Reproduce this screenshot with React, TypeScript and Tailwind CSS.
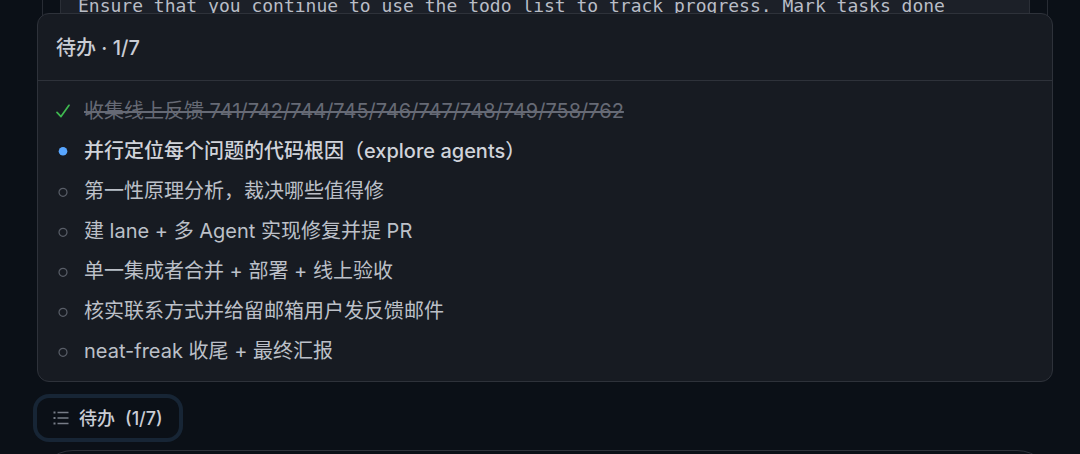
type Status = "done" | "active" | "pending";

type Todo = { title: string; status: Status };

const todos: Todo[] = [
  { title: "收集线上反馈 741/742/744/745/746/747/748/749/758/762", status: "done" },
  { title: "并行定位每个问题的代码根因（explore agents）", status: "active" },
  { title: "第一性原理分析，裁决哪些值得修", status: "pending" },
  { title: "建 lane + 多 Agent 实现修复并提 PR", status: "pending" },
  { title: "单一集成者合并 + 部署 + 线上验收", status: "pending" },
  { title: "核实联系方式并给留邮箱用户发反馈邮件", status: "pending" },
  { title: "neat-freak 收尾 + 最终汇报", status: "pending" },
];

const titleStyles: Record<Status, string> = {
  done: "text-[#666a75] line-through decoration-2",
  active: "font-medium text-[#d0d3da]",
  pending: "text-[#bcc0c8]",
};

function StatusIcon({ status }: { status: Status }) {
  return (
    <svg viewBox="0 0 14 16" className="h-4 w-3.5 shrink-0" fill="none" aria-hidden="true">
      {status === "done" && (
        <path d="M1 9.3 5 13.6 13 2.3" stroke="#3fb950" strokeWidth="1.7" strokeLinejoin="round" strokeLinecap="round" />
      )}
      {status === "active" && <circle cx="7" cy="8.3" r="4.3" fill="#58a6ff" />}
      {status === "pending" && <circle cx="7" cy="9.3" r="4" stroke="#595e68" strokeWidth="1.2" />}
    </svg>
  );
}

function ListIcon() {
  return (
    <svg viewBox="0 0 16 16" className="size-4 shrink-0" fill="none" stroke="#777c87" aria-hidden="true">
      <path d="M4.5 2.5H15.5M4.5 8H15.5M4.5 13.5H15.5" strokeWidth="1.3" />
      <path d="M.5 2.5H2.5M.5 8H2.5M.5 13.5H2.5" strokeWidth="2" />
    </svg>
  );
}

export default function App() {
  return (
    <main className="flex h-screen flex-col overflow-hidden bg-[#0b1017] pl-[37px] pr-[27px] font-['Inter','Noto_Sans_CJK_SC',sans-serif] text-[#c9ccd4]">
      <div className="mx-[5px] flex h-5 shrink-0 flex-col justify-end border-x border-[#282c34] px-[17px]">
        <div className="h-5 border-x border-[#2b2f37] bg-[#1c2028] px-[17px]">
          <p className="-mt-2 whitespace-pre font-['DejaVu_Sans_Mono',monospace] text-[18px] leading-7 text-[#b9bdc6]">
            Ensure that you continue to use the todo list to track progress. Mark tasks done
          </p>
        </div>
      </div>

      <section
        aria-labelledby="todo-heading"
        className="relative -mt-[7px] shrink-0 rounded-xl border border-[#2e323a] bg-[#171b22]"
      >
        <header className="border-b border-[#2e323a] px-[18px] pb-[17px] pt-[19px]">
          <h2 id="todo-heading" className="text-[20px] font-medium leading-[30px]">
            待办 · 1/7
          </h2>
        </header>
        <ul className="px-[18px] py-[10px]">
          {todos.map((todo) => (
            <li key={todo.title} className="flex h-10 items-center gap-[14px]">
              <StatusIcon status={todo.status} />
              <span className={`whitespace-nowrap text-[20px] leading-[30px] ${titleStyles[todo.status]}`}>
                {todo.title}
              </span>
            </li>
          ))}
        </ul>
      </section>

      <button
        type="button"
        className="mt-4 flex h-10 shrink-0 items-center gap-[10px] self-start rounded-xl px-4 text-[18px] font-medium ring-4 ring-[#172535]"
      >
        <ListIcon />
        <span className="flex gap-[10px]">
          <span>待办</span>
          <span>(1/7)</span>
        </span>
      </button>

      <div className="mt-3 h-20 shrink-0 rounded-[36px] border border-[#2e323a]" />
    </main>
  );
}
